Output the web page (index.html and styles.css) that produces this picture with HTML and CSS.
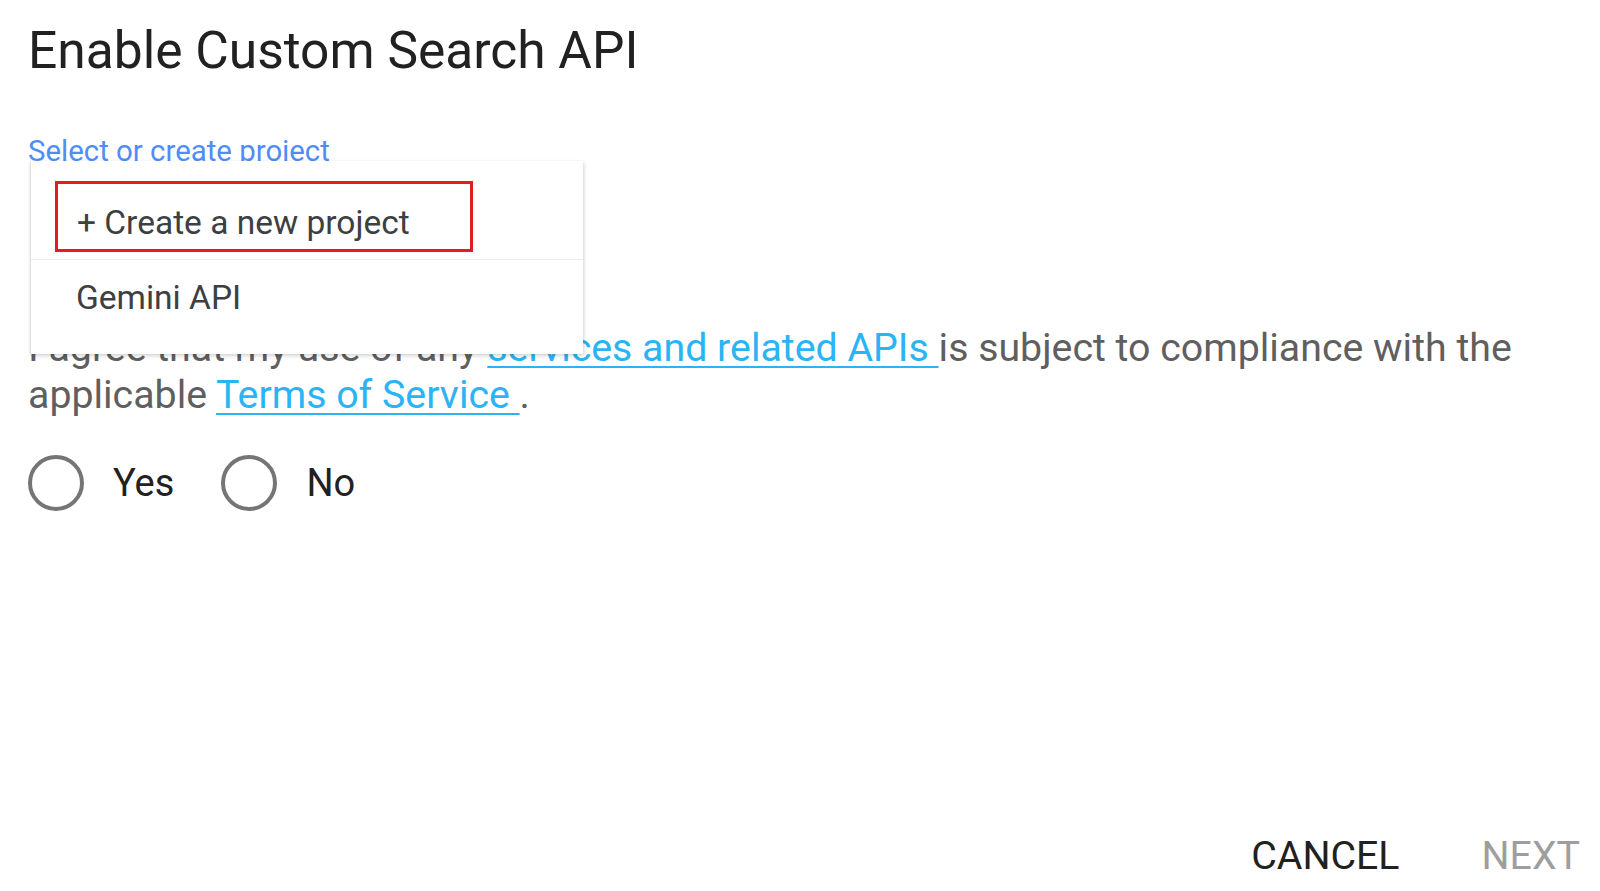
FILE: index.html
```html
<!DOCTYPE html>
<html lang="en">
<head>
<meta charset="utf-8">
<title>Enable Custom Search API</title>
<link rel="stylesheet" href="styles.css">
</head>
<body>
<main class="dialog">
  <h1 class="dialog-title">Enable Custom Search API</h1>
  <div class="project-field">
    <label class="field-label">Select or create project</label>
    <div class="menu">
      <div class="menu-item menu-item-create">
        <div class="highlight"><span>+ Create a new project</span></div>
      </div>
      <div class="menu-item menu-item-project">Gemini API</div>
    </div>
  </div>
  <p class="terms">I agree that my use of any <a href="#">services and related APIs </a>is subject to compliance with the applicable <a href="#">Terms of Service </a>.</p>
  <div class="radio-group">
    <label class="radio"><span class="radio-circle"></span><span class="radio-label">Yes</span></label>
    <label class="radio"><span class="radio-circle"></span><span class="radio-label">No</span></label>
  </div>
  <div class="actions">
    <button class="btn btn-cancel" type="button">CANCEL</button>
    <button class="btn btn-next" type="button" disabled>NEXT</button>
  </div>
</main>
</body>
</html>
```

FILE: styles.css
```css
html, body {
  margin: 0;
  padding: 0;
  background: #ffffff;
}

body {
  font-family: Roboto, "Noto Sans", "Liberation Sans", sans-serif;
}

.dialog {
  height: 891px;
  box-sizing: border-box;
  display: flex;
  flex-direction: column;
  padding: 21px 20px 12px 28px;
}

.dialog-title {
  margin: 0;
  font-size: 51.5px;
  font-weight: 400;
  line-height: 60px;
  color: #212121;
}

.project-field {
  position: relative;
  margin-top: 53px;
  height: 191px;
  flex-shrink: 0;
}

.field-label {
  display: block;
  font-size: 29.4px;
  line-height: 34px;
  color: #4f8df5;
}

.menu {
  position: absolute;
  top: 27px;
  left: 2px;
  width: 553px;
  box-sizing: border-box;
  padding: 20px 0 19px;
  background: #ffffff;
  border-left: 1px solid #e2e2e2;
  box-shadow: 1px 2px 4px rgba(0, 0, 0, 0.16), 0 0 2px rgba(0, 0, 0, 0.06);
  z-index: 2;
}

.menu-item {
  font-size: 33.5px;
  color: #3c4043;
  display: flex;
  box-sizing: border-box;
}

.menu-item-create {
  height: 78px;
  align-items: flex-start;
  padding-left: 24px;
}

.highlight {
  width: 418px;
  height: 71px;
  box-sizing: border-box;
  border: 3px solid #e31b23;
  display: flex;
  align-items: center;
  padding: 12px 0 0 19px;
}

.menu-item-project {
  height: 76px;
  align-items: center;
  padding-left: 45px;
  border-top: 1px solid #ebebeb;
}

.terms {
  margin: 0;
  font-size: 39.3px;
  line-height: 46.5px;
  color: #5f5f5f;
}

.terms a {
  color: #2ab4f3;
  text-decoration: underline;
  text-decoration-thickness: 2px;
  text-underline-offset: 5px;
}

.radio-group {
  display: flex;
  align-items: center;
  gap: 47px;
  margin-top: 37px;
}

.radio {
  display: flex;
  align-items: center;
  gap: 29px;
}

.radio-circle {
  width: 56px;
  height: 56px;
  box-sizing: border-box;
  border: 4.5px solid #757575;
  border-radius: 50%;
}

.radio-label {
  font-size: 38px;
  line-height: 1;
  color: #212121;
}

.actions {
  margin-top: auto;
  display: flex;
  justify-content: flex-end;
  gap: 82px;
}

.btn {
  font-family: inherit;
  font-size: 39.3px;
  line-height: 46px;
  padding: 0;
  border: none;
  background: none;
}

.btn-cancel {
  color: #212121;
}

.btn-next {
  color: #9e9e9e;
}
```
